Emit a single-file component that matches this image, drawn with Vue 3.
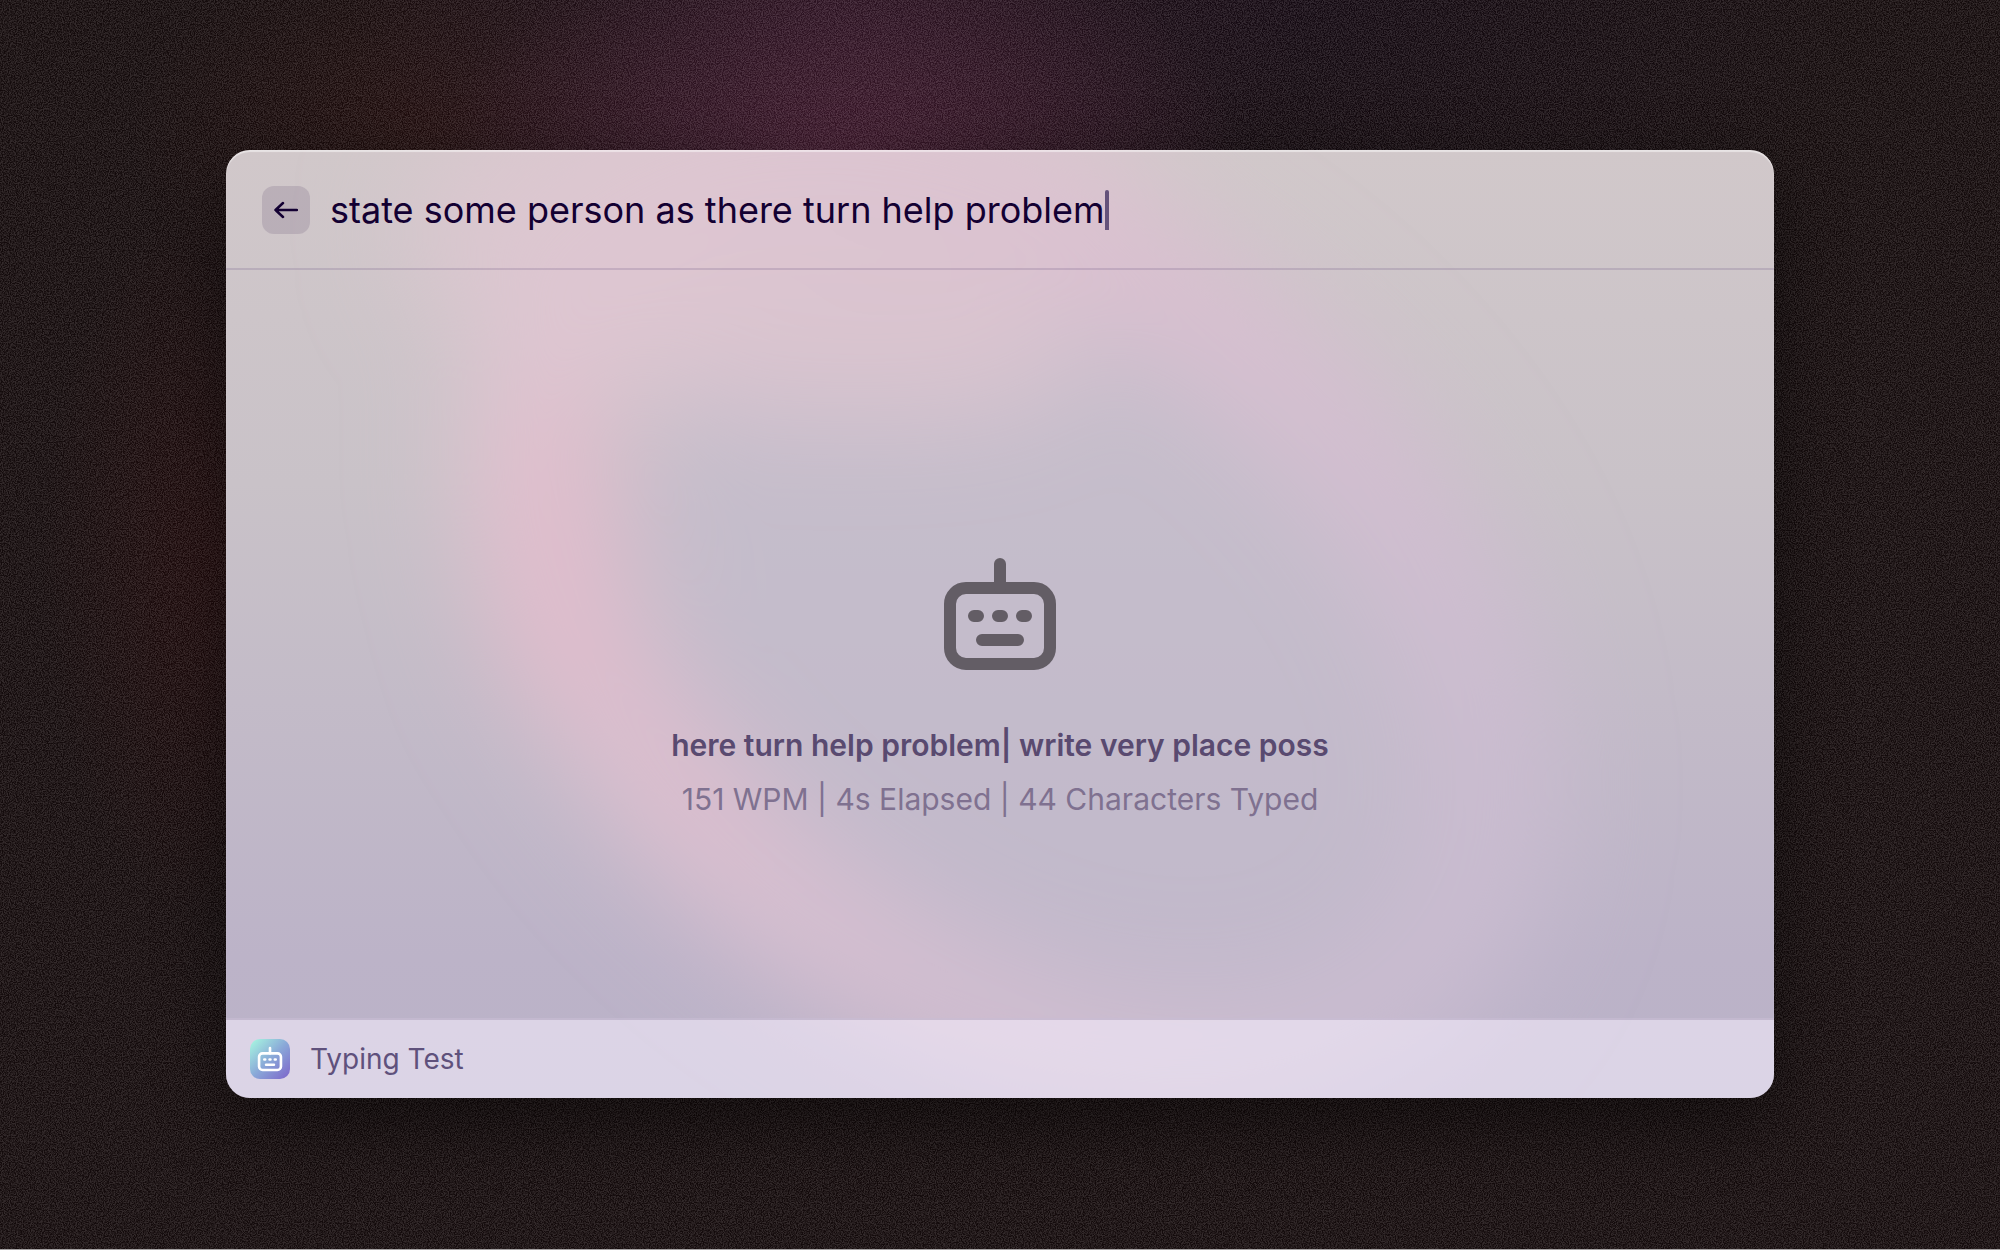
<script setup>
import { ref } from 'vue'

const typed = ref('state some person as there turn help problem')
const prompt = 'here turn help problem| write very place poss'
const stats = ['151 WPM', '4s Elapsed', '44 Characters Typed']
</script>

<template>
  <div class="desktop">
    <svg class="grain" aria-hidden="true">
      <filter id="grain" x="0" y="0" width="100%" height="100%" color-interpolation-filters="sRGB">
        <feTurbulence type="fractalNoise" baseFrequency="0.85" numOctaves="2" seed="4" />
        <feColorMatrix values="3 1 0 0 -1.5  3 1 0 0 -1.5  3 1 0 0 -1.5  0 0 0 0 1" />
      </filter>
      <rect width="100%" height="100%" filter="url(#grain)" />
    </svg>

    <main class="window">
      <svg class="aurora" viewBox="0 0 1548 948" preserveAspectRatio="none" aria-hidden="true">
        <defs>
          <linearGradient id="base" x1="0" y1="0" x2="0" y2="1">
            <stop offset="0" stop-color="#d1c8ca" />
            <stop offset="0.35" stop-color="#c9c2c8" />
            <stop offset="0.85" stop-color="#bcb3c8" />
            <stop offset="1" stop-color="#bab2c8" />
          </linearGradient>
          <linearGradient id="ring" gradientUnits="userSpaceOnUse" x1="-545" y1="0" x2="545" y2="0">
            <stop offset="0" stop-color="#dec6d1" />
            <stop offset="0.4" stop-color="#dac0d0" />
            <stop offset="1" stop-color="#c9bcd0" />
          </linearGradient>
          <filter id="soft" filterUnits="userSpaceOnUse" x="-200" y="-200" width="1948" height="1348">
            <feGaussianBlur stdDeviation="52" />
          </filter>
        </defs>
        <rect width="1548" height="948" fill="url(#base)" />
        <g filter="url(#soft)">
          <ellipse cx="560" cy="80" rx="380" ry="190" fill="#dfc8d1" opacity="0.7" />
          <ellipse cx="820" cy="500" rx="460" ry="310" transform="rotate(38 820 500)" fill="#c3bbcc" opacity="0.7" />
          <g transform="translate(785 470) rotate(38)">
            <ellipse rx="545" ry="360" fill="none" stroke="url(#ring)" stroke-width="130" />
          </g>
          <ellipse cx="560" cy="170" rx="300" ry="90" transform="rotate(8 560 170)" fill="#ddc5d1" opacity="0.8" />
          <ellipse cx="330" cy="400" rx="70" ry="170" fill="#e5b9c9" opacity="0.6" />
          <ellipse cx="430" cy="590" rx="50" ry="150" transform="rotate(-38 430 590)" fill="#e0b8cb" opacity="0.4" />
        </g>
      </svg>

      <header class="search">
        <button class="back" type="button" aria-label="Back">
          <svg viewBox="0 0 24 24" width="24" height="24" aria-hidden="true">
            <path d="M23 12H1.500M9 5L1.500 12l7.500 7" />
          </svg>
        </button>
        <input v-model="typed" class="field" type="text" aria-label="Typed words" spellcheck="false" />
        <span class="caret"></span>
      </header>

      <section class="result">
        <svg class="robot" viewBox="0 0 16 16" width="128" height="128" aria-hidden="true">
          <rect x="1.75" y="4.75" width="12.5" height="9.5" rx="2" />
          <path d="M8 1.75v3M4.75 8.25h.5M7.75 8.25h.5M10.75 8.25h.5M5.75 11.25h4.5" />
        </svg>
        <h1 class="prompt">{{ prompt }}</h1>
        <p class="stats">{{ stats.join(' | ') }}</p>
      </section>

      <footer class="bar">
        <span class="tile">
          <svg class="robot" viewBox="0 0 16 16" width="28" height="28" aria-hidden="true">
            <rect x="1.75" y="4.75" width="12.5" height="9.5" rx="2" />
            <path d="M8 1.75v3M4.75 8.25h.5M7.75 8.25h.5M10.75 8.25h.5M5.75 11.25h4.5" />
          </svg>
        </span>
        <span class="name">Typing Test</span>
      </footer>
    </main>
  </div>
</template>

<style>
body {
  margin: 0;
}
</style>

<style scoped>
.desktop {
  position: relative;
  box-sizing: border-box;
  min-height: 100vh;
  display: flex;
  flex-direction: column;
  padding: 150px 226px 151px;
  border-bottom: 1px solid #a5a2a3;
  overflow: hidden;
  font-family: Inter, "Liberation Sans", sans-serif;
  background:
    radial-gradient(ellipse 400px 240px at 840px 160px, rgba(85, 32, 60, 0.65), transparent),
    radial-gradient(ellipse 480px 360px at 830px 0, rgba(46, 20, 38, 0.75), transparent),
    radial-gradient(ellipse 300px 200px at 430px 130px, rgba(48, 16, 14, 0.5), transparent),
    radial-gradient(ellipse 180px 360px at 220px 560px, rgba(46, 10, 11, 0.5), transparent),
    radial-gradient(ellipse 560px 300px at 1300px 0, rgba(22, 10, 23, 0.7), transparent),
    #160c0d;
}

.grain {
  position: absolute;
  inset: 0;
  width: 100%;
  height: 100%;
  opacity: 0.12;
}

.window {
  position: relative;
  flex: 1;
  display: flex;
  flex-direction: column;
  border-radius: 24px;
  overflow: hidden;
  isolation: isolate;
  box-shadow: 0 24px 70px rgba(0, 0, 0, 0.45);
}

.window::after {
  content: "";
  position: absolute;
  inset: 0;
  border-radius: 24px;
  box-shadow: inset 0 2px 1px rgba(255, 255, 255, 0.5);
  pointer-events: none;
}

.aurora {
  position: absolute;
  inset: 0;
  z-index: -1;
  width: 100%;
  height: 100%;
}

.search {
  box-sizing: border-box;
  display: flex;
  align-items: center;
  height: 120px;
  padding: 2px 36px 0;
  border-bottom: 2px solid rgba(110, 85, 130, 0.22);
}

.back {
  display: flex;
  align-items: center;
  justify-content: center;
  width: 48px;
  height: 48px;
  margin-right: 20px;
  padding: 0;
  border: 0;
  border-radius: 12px;
  background: rgba(100, 80, 115, 0.2);
}

.back svg {
  fill: none;
  stroke: #130032;
  stroke-width: 2.5;
  stroke-linecap: round;
  stroke-linejoin: round;
}

.field {
  field-sizing: content;
  height: 60px;
  padding: 0;
  border: 0;
  outline: 0;
  background: none;
  color: #130032;
  font: 400 36px/60px Inter, "Liberation Sans", sans-serif;
}

.caret {
  width: 4px;
  height: 40px;
  border-radius: 2px 2px 0 0;
  background: #64527a;
}

.result {
  flex: 1;
  display: flex;
  flex-direction: column;
  align-items: center;
  justify-content: center;
  padding-top: 88px;
  text-align: center;
}

.robot {
  fill: none;
  stroke: #635d65;
  stroke-width: 1.5;
  stroke-linecap: round;
}

.prompt,
.stats {
  margin: 0;
  font-size: 30px;
  line-height: 54px;
}

.prompt {
  margin-top: 40px;
  font-weight: 600;
  color: #594a70;
}

.stats {
  font-weight: 400;
  color: #7f7190;
}

.bar {
  display: flex;
  align-items: center;
  gap: 20px;
  height: 78px;
  padding: 0 24px;
  border-top: 2px solid rgba(200, 188, 212, 0.6);
  background: rgba(247, 241, 255, 0.54);
  background-clip: padding-box;
}

.tile {
  display: flex;
  align-items: center;
  justify-content: center;
  width: 40px;
  height: 40px;
  border-radius: 10px;
  background: linear-gradient(135deg, #a5f2e0 5%, #8aa9d8 50%, #7e6bcc 95%);
}

.tile .robot {
  stroke: #fff;
}

.name {
  font-size: 28px;
  line-height: 40px;
  color: #5f517c;
}
</style>
